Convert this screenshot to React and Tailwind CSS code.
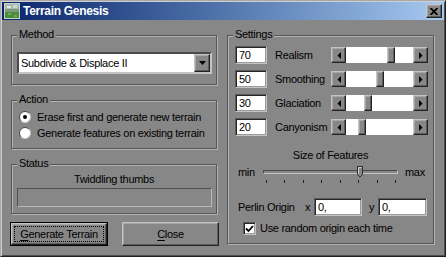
import React from "react";

const raised =
  "border border-t-[#c4c4c4] border-l-[#c4c4c4] border-r-[#222] border-b-[#222] shadow-[inset_-1px_-1px_0_#5c5c5c,inset_1px_1px_0_#a6a6a6]";
const sunken =
  "border border-t-[#5a5a5a] border-l-[#5a5a5a] border-r-[#c4c4c4] border-b-[#c4c4c4] shadow-[inset_1px_1px_0_#262626,inset_-1px_-1px_0_#9a9a9a]";

function Group({ label, className = "", children }) {
  return (
    <div
      className={`relative border border-[#575757] shadow-[inset_1px_1px_0_#b3b3b3,1px_1px_0_#b3b3b3] ${className}`}
    >
      <span className="absolute -top-[8px] left-[5px] px-[2px] bg-[#878787] leading-[13px]">
        {label}
      </span>
      {children}
    </div>
  );
}

function Radio({ checked }) {
  return (
    <svg width="12" height="12" viewBox="0 0 12 12">
      <circle cx="6" cy="6" r="5.5" fill="#fff" />
      <path d="M2.1 9.9 A5.5 5.5 0 0 1 9.9 2.1" fill="none" stroke="#4a4a4a" />
      <path d="M9.9 2.1 A5.5 5.5 0 0 1 2.1 9.9" fill="none" stroke="#c8c8c8" />
      {checked && <circle cx="6" cy="6" r="2" fill="#000" />}
    </svg>
  );
}

function Arrow({ dir }) {
  return (
    <div className={`w-[15px] h-full flex items-center justify-center bg-[#878787] ${raised}`}>
      <svg width="4" height="7" viewBox="0 0 4 7">
        {dir === "left" ? (
          <polygon points="4,0 4,7 0.5,3.5" fill="#000" />
        ) : (
          <polygon points="0,0 0,7 3.5,3.5" fill="#000" />
        )}
      </svg>
    </div>
  );
}

function Scroll({ value }) {
  return (
    <div className="flex w-[97px] h-[16px]">
      <Arrow dir="left" />
      <div className="relative flex-1 bg-white">
        <div
          className={`absolute top-0 h-full w-[8px] bg-[#878787] ${raised}`}
          style={{ left: Math.round((value / 100) * 59) }}
        />
      </div>
      <Arrow dir="right" />
    </div>
  );
}

function Field({ value, className = "" }) {
  return (
    <div className={`h-[18px] bg-white flex items-center pl-[3px] leading-[13px] ${sunken} ${className}`}>
      {value}
    </div>
  );
}

const settings = [
  ["70", "Realism", 70],
  ["50", "Smoothing", 50],
  ["30", "Glaciation", 30],
  ["20", "Canyonism", 20],
];

export default function App() {
  return (
    <div className="w-[446px] h-[257px] bg-[#878787] text-black text-[11px] tracking-[-0.3px] font-['Liberation_Sans',Arial,sans-serif] border border-t-[#a8a8a8] border-l-[#a8a8a8] border-r-[#1e1e1e] border-b-[#1e1e1e] shadow-[inset_1px_1px_0_#cfcfcf,inset_-1px_-1px_0_#4e4e4e] overflow-hidden">
      {/* title bar */}
      <div className="mx-[1px] mt-[1px] h-[18px] flex items-center bg-gradient-to-r from-[#0a246a] to-[#a6caf0]">
        <svg width="16" height="16" viewBox="0 0 16 16" className="ml-[2px]">
          <rect width="16" height="16" fill="#c8d4c8" />
          <rect x="1" y="1" width="14" height="14" fill="#7c9a7c" />
          <rect x="1" y="1" width="14" height="5" fill="#a9b8b0" />
          <rect x="3" y="3" width="4" height="2" fill="#dfe6e2" />
          <rect x="9" y="2" width="4" height="3" fill="#cfd9d3" />
          <rect x="1" y="9" width="14" height="6" fill="#4e8a3e" />
          <rect x="4" y="10" width="3" height="2" fill="#6fae54" />
          <rect x="10" y="12" width="3" height="2" fill="#6fae54" />
        </svg>
        <span className="ml-[3px] text-white font-bold text-[12px] tracking-[-0.3px] leading-[14px]">
          Terrain Genesis
        </span>
        <div className={`ml-auto mr-[2px] w-[16px] h-[14px] flex items-center justify-center bg-[#878787] ${raised}`}>
          <svg width="8" height="7" viewBox="0 0 8 7">
            <path d="M0.5 0 L7.5 7 M7.5 0 L0.5 7" stroke="#000" strokeWidth="1.8" />
          </svg>
        </div>
      </div>

      <div className="flex pl-[9px]">
        {/* left column */}
        <div className="w-[209px] flex flex-col">
          <Group label="Method" className="ml-[1px] mt-[15px] w-[206px] h-[50px]">
            <div className="ml-[5px] mt-[16px] w-[195px] h-[22px] bg-white flex items-center border-2 border-t-[#4a4a4a] border-l-[#4a4a4a] border-r-[#c4c4c4] border-b-[#c4c4c4]">
              <span className="pl-[2px] flex-1 leading-[13px]">Subdivide &amp; Displace II</span>
              <div className={`w-[16px] h-full flex items-center justify-center bg-[#878787] ${raised}`}>
                <svg width="7" height="4" viewBox="0 0 7 4">
                  <polygon points="0,0 7,0 3.5,4" fill="#000" />
                </svg>
              </div>
            </div>
          </Group>

          <Group label="Action" className="ml-[1px] mt-[15px] w-[206px] h-[49px]">
            <div className="pt-[8px] pl-[7px] flex flex-col">
              <div className="h-[16px] flex items-center gap-[6px]">
                <Radio checked />
                <span>Erase first and generate new terrain</span>
              </div>
              <div className="h-[16px] flex items-center gap-[6px]">
                <Radio />
                <span>Generate features on existing terrain</span>
              </div>
            </div>
          </Group>

          <Group label="Status" className="ml-[1px] mt-[15px] w-[206px] h-[50px]">
            <div className="pt-[8px] text-center leading-[13px]">Twiddling thumbs</div>
            <div className="ml-[5px] mt-[2px] w-[195px] h-[19px] border border-t-[#505050] border-l-[#505050] border-r-[#b8b8b8] border-b-[#b8b8b8]" />
          </Group>

          <div className="mt-[8px] flex justify-between">
            <button className="w-[98px] h-[24px] border border-black flex p-0">
              <div className={`flex-1 flex ${raised} border-r-[#3a3a3a] border-b-[#3a3a3a]`}>
                <div className="flex-1 m-[2px] border border-dotted border-black flex items-center justify-center leading-[13px]">
                  <span>
                    <u className="underline-offset-[2px]">G</u>enerate Terrain
                  </span>
                </div>
              </div>
            </button>
            <button className={`w-[97px] h-[24px] flex items-center justify-center leading-[13px] ${raised}`}>
              <span>
                <u className="underline-offset-[2px]">C</u>lose
              </span>
            </button>
          </div>
        </div>

        {/* right column */}
        <Group label="Settings" className="ml-[8px] mt-[15px] w-[207px] h-[209px]">
          <div className="pt-[10px] pl-[7px] flex flex-col gap-[6px]">
            {settings.map(([v, name, pos]) => (
              <div key={name} className="flex items-center h-[18px]">
                <Field value={v} className="w-[32px]" />
                <span className="ml-[8px] w-[56px] leading-[13px]">{name}</span>
                <Scroll value={pos} />
              </div>
            ))}
          </div>

          <div className="mt-[13px] text-center leading-[13px]">Size of Features</div>

          <div className="mt-[4px] flex items-center h-[13px]">
            <span className="ml-[10px] w-[25px] leading-[13px]">min</span>
            <div className="relative w-[135px] h-[13px]">
              <div className="absolute left-0 right-0 top-[4px] h-[4px] border-t border-l border-[#4a4a4a] border-b border-b-[#c4c4c4] border-r border-r-[#c4c4c4]" />
              <svg width="6" height="12" viewBox="0 0 6 12" className="absolute top-0 left-[94px]">
                <path d="M0.5 0.5 H5.5 V8.5 L3 11 L0.5 8.5 Z" fill="#878787" stroke="#2a2a2a" />
                <path d="M1.5 8 V1.5 H4.5" fill="none" stroke="#cfcfcf" />
              </svg>
            </div>
            <span className="ml-[7px] leading-[13px]">max</span>
          </div>
          <div className="ml-[38px] w-[130px] h-[4px] flex justify-between">
            {[0, 1, 2, 3, 4, 5, 6, 7].map((i) => (
              <div key={i} className="w-px h-[3px] mt-[1px] bg-[#222]" />
            ))}
          </div>

          <div className="mt-[15px] flex items-center h-[18px]">
            <span className="ml-[10px] w-[67px] leading-[13px]">Perlin Origin</span>
            <span className="w-[9px] leading-[13px]">x</span>
            <Field value="0," className="w-[48px]" />
            <span className="w-[16px] pl-[7px] leading-[13px]">y</span>
            <Field value="0," className="w-[49px]" />
          </div>

          <div className="mt-[6px] ml-[15px] flex items-center gap-[4px] h-[13px]">
            <div className={`w-[13px] h-[13px] bg-white flex items-center justify-center ${sunken}`}>
              <svg width="9" height="9" viewBox="0 0 9 9">
                <path d="M1 4.5 L3.5 7 L8 2" fill="none" stroke="#000" strokeWidth="1.8" />
              </svg>
            </div>
            <span className="leading-[13px]">Use random origin each time</span>
          </div>
        </Group>
      </div>
    </div>
  );
}
